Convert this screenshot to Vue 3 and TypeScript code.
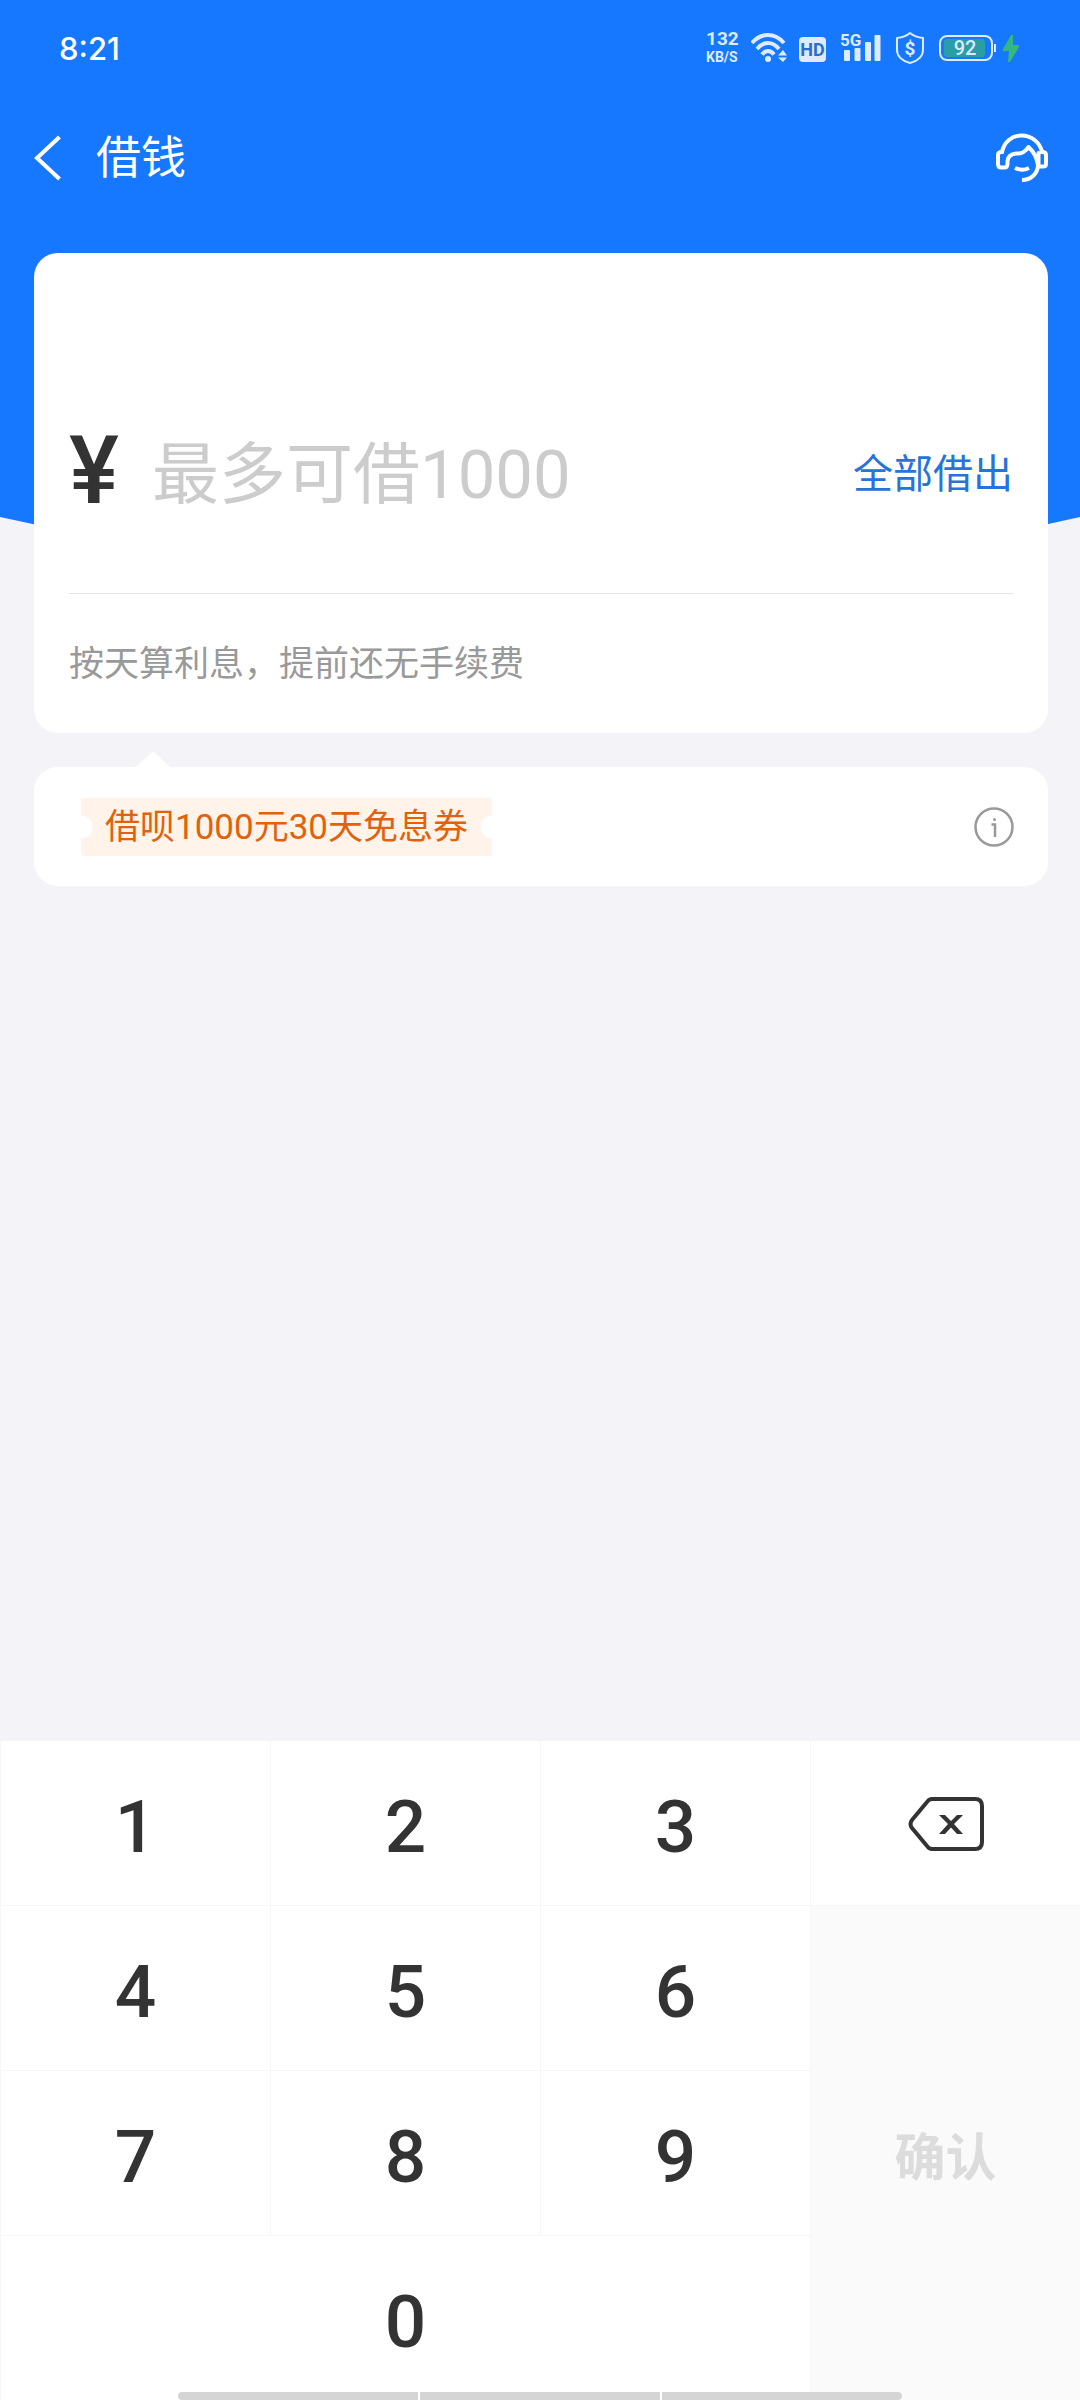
<script setup lang="ts">
import { ref } from 'vue'

const LIMIT = 1000
const amount = ref('')
const digits = ['1', '2', '3', '4', '5', '6', '7', '8', '9', '0']

function press(digit: string): void {
  const next = String(Number(amount.value + digit))
  if (Number(next) <= LIMIT) amount.value = next
}

function erase(): void {
  amount.value = amount.value.slice(0, -1)
}

function borrowAll(): void {
  amount.value = String(LIMIT)
}
</script>

<template>
  <div class="page">
    <svg class="backdrop" viewBox="0 0 1080 580" preserveAspectRatio="none" aria-hidden="true">
      <path d="M0 0H1080V517Q540 640 0 517Z" fill="#1677ff" />
    </svg>

    <div class="status">
      <span class="clock">8:21</span>
      <div class="indicators">
        <div class="rate"><span class="rate-value">132</span><span class="rate-unit">KB/S</span></div>
        <svg width="36" height="32" viewBox="0 0 36 32" fill="none" aria-hidden="true">
          <g stroke="#dcebff" stroke-width="4">
            <path d="M1 11Q8 3 17 3T33 11" />
            <path d="M6 17Q11 11 17 11T28 17" />
            <path d="M11 22.500Q13.500 19 17 19T23 22.500" />
          </g>
          <circle cx="17" cy="27" r="3" fill="#dcebff" />
          <path d="M27 23.500L32 18L36 23.500ZM27 25.500L32 30L36 25.500Z" fill="#dcebff" />
        </svg>
        <svg width="27" height="32" viewBox="0 0 27 32" aria-hidden="true">
          <rect y="5" width="27" height="25" rx="4" fill="#dcebff" />
          <text x="13.500" y="24" text-anchor="middle" font-size="18" font-weight="700" fill="#2a6bd0" class="latin">HD</text>
        </svg>
        <svg width="43" height="40" viewBox="0 -4 43 40" fill="#dcebff" aria-hidden="true">
          <text x="2" y="14" font-size="17" font-weight="700" class="latin">5G</text>
          <rect x="6" y="18" width="6" height="11" rx="1" />
          <rect x="16.500" y="16" width="6" height="13" rx="1" />
          <rect x="27" y="10" width="6" height="19" rx="1" />
          <rect x="36.500" y="3" width="6" height="26" rx="1" />
        </svg>
        <svg width="34" height="34" viewBox="0 0 34 34" aria-hidden="true">
          <path d="M17 2C20 4.500 25 6.500 30 7V19C30 25 25 30 17 32C9 30 4 25 4 19V7C9 6.500 14 4.500 17 2Z" fill="none" stroke="#dcebff" stroke-width="2" stroke-linejoin="round" />
          <text x="17" y="23.500" text-anchor="middle" font-size="19" font-weight="700" fill="#dcebff" class="latin">$</text>
        </svg>
        <svg width="80" height="32" viewBox="0 0 80 32" aria-hidden="true">
          <rect x="1" y="4" width="52" height="24" rx="7" fill="none" stroke="#dcebff" stroke-width="2" />
          <rect x="5" y="7" width="41" height="18" rx="3" fill="#2b9da6" />
          <rect x="55" y="12" width="2" height="8" fill="#dcebff" />
          <text x="26" y="23" text-anchor="middle" font-size="20" font-weight="500" fill="#dcebff" class="latin">92</text>
          <path d="M72 3L64 17V19H70L69 30H71L80 15V13H74V3Z" fill="#34b87c" />
        </svg>
      </div>
    </div>

    <header class="nav">
      <button class="icon-button back" type="button" aria-label="返回">
        <svg width="28" height="46" viewBox="0 0 28 46" fill="none" stroke="#fff" stroke-width="4">
          <path d="M25.500 2L3 23L25.500 44" />
        </svg>
      </button>
      <h1>借钱</h1>
      <button class="icon-button service" type="button" aria-label="客服">
        <svg width="52" height="50" viewBox="0 0 52 50" fill="none" stroke="#fff" stroke-width="4" stroke-linecap="round" stroke-linejoin="round">
          <path d="M6 19C8 9 16 2.500 25.500 2.500S44 9 46 19" />
          <path d="M6 19Q2 19 2 22V31Q2 34.500 5 34.500H8Q11.500 34.500 11.500 31V28C12 24 15 21 20 20.500C26 21 29 19 32.500 14C38 19 41 25 42 32" />
          <path d="M46 19Q50 19 50 22V31Q50 33.500 47 33.500H42.500V20" />
          <path d="M42 33C41 41 35 47 26 47" stroke-linecap="butt" />
          <path d="M19 35Q26 38.500 33 35" stroke-linecap="butt" />
        </svg>
      </button>
    </header>

    <main>
      <section class="card loan">
        <div class="amount">
          <label for="amount" class="yen">¥</label>
          <input id="amount" v-model="amount" type="text" inputmode="none" placeholder="最多可借1000" />
          <button class="all" type="button" @click="borrowAll">全部借出</button>
        </div>
        <p class="note">按天算利息，提前还无手续费</p>
      </section>

      <section class="card offer">
        <span class="coupon">借呗1000元30天免息券</span>
        <button class="icon-button" type="button" aria-label="优惠说明">
          <svg width="40" height="40" viewBox="0 0 40 40" fill="none" stroke="#999">
            <circle cx="20" cy="20" r="18.500" stroke-width="2.500" />
            <path d="M17.500 17.500H21V30" stroke-width="2.500" />
            <circle cx="20.500" cy="12.500" r="1.500" fill="#999" stroke="none" />
          </svg>
        </button>
      </section>
    </main>

    <div class="keypad">
      <button
        v-for="digit in digits"
        :key="digit"
        type="button"
        class="key"
        :class="{ wide: digit === '0' }"
        @click="press(digit)"
      >{{ digit }}</button>
      <button type="button" class="key erase" aria-label="删除" @click="erase">
        <svg width="76" height="56" viewBox="0 0 76 56" fill="none" stroke="#333" stroke-width="4" stroke-linejoin="round">
          <path d="M24 3H67Q74 3 74 10V46Q74 53 67 53H24Q21 53 19 50L4 32Q1 28 4 24L19 6Q21 3 24 3Z" />
          <path d="M31 19H37L43 25L49 19H55L46 28L55 38H49L43 31.500L37 38H31L40 28Z" fill="#333" stroke="none" />
        </svg>
      </button>
      <button type="button" class="key confirm" :disabled="!amount">确认</button>
      <div class="home-bar" aria-hidden="true"><i></i><i></i><i></i></div>
    </div>
  </div>
</template>

<style>
body {
  margin: 0;
  background: #f4f4f8;
}
</style>

<style scoped>
.page {
  position: relative;
  display: flex;
  flex-direction: column;
  min-height: 100vh;
  background: #f4f4f8;
  color: #333;
  font-family: Roboto, "Noto Sans CJK SC", sans-serif;
}

button,
input {
  margin: 0;
  padding: 0;
  border: 0;
  background: none;
  font-family: inherit;
  color: inherit;
}

svg {
  display: block;
}

.backdrop {
  position: absolute;
  top: 0;
  left: 0;
  width: 100%;
  height: 580px;
}

.status,
.nav,
main {
  position: relative;
}

.status {
  display: flex;
  align-items: center;
  justify-content: space-between;
  height: 96px;
  padding: 0 61px 0 59px;
  color: #fff;
}

.clock {
  padding-top: 2px;
  font: 500 31px/40px Inter, sans-serif;
}

.indicators {
  display: flex;
  align-items: center;
  gap: 12px;
}

.latin {
  font-family: Roboto, sans-serif;
}

.rate {
  display: flex;
  flex-direction: column;
  width: 33px;
  font-weight: 700;
  white-space: nowrap;
  color: #dcebff;
}

.rate-value {
  font-size: 19px;
  line-height: 18px;
}

.rate-unit {
  font-size: 14px;
  line-height: 18px;
}

.nav {
  display: flex;
  align-items: center;
  height: 124px;
  padding: 0 32px 0 34px;
  color: #fff;
}

.icon-button {
  flex: none;
  cursor: pointer;
}

h1 {
  flex: 1;
  margin: 0 0 0 34px;
  padding-top: 2px;
  font-size: 45px;
  font-weight: 400;
  line-height: 64px;
}

main {
  display: flex;
  flex-direction: column;
  gap: 34px;
  padding: 33px 32px 0 34px;
}

.card {
  border-radius: 24px;
  background: #fff;
}

.loan {
  padding: 96px 35px 0;
}

.amount {
  display: flex;
  align-items: center;
  height: 244px;
  border-bottom: 1px solid #e5e5e5;
}

.yen {
  flex: none;
  width: 83px;
  font-size: 94px;
  font-weight: 500;
  line-height: 100px;
}

.amount input {
  flex: 1;
  min-width: 0;
  height: 100px;
  padding-top: 8px;
  outline: none;
  font-size: 67px;
}

.amount input::placeholder {
  color: #ccc;
  opacity: 1;
}

.all {
  flex: none;
  padding-top: 8px;
  font-size: 40px;
  line-height: 56px;
  color: #2673d9;
  cursor: pointer;
}

.note {
  margin: 0;
  padding-top: 2px;
  font-size: 35px;
  line-height: 137px;
  color: #999;
}

.offer {
  position: relative;
  display: flex;
  align-items: center;
  justify-content: space-between;
  height: 119px;
  padding: 0 34px 0 47px;
}

.offer::before {
  content: "";
  position: absolute;
  left: 102px;
  bottom: 100%;
  border: solid transparent;
  border-width: 0 17px 16px;
  border-bottom-color: #fff;
}

.coupon {
  padding: 2px 24px 0;
  border-radius: 4px;
  background:
    radial-gradient(circle at 0 50%, #fff 11px, transparent 12px),
    radial-gradient(circle at 100% 50%, #fff 11px, transparent 12px),
    #fff3ea;
  font-size: 35px;
  line-height: 56px;
  color: #e0620d;
}

.keypad {
  position: relative;
  display: grid;
  grid-template-columns: repeat(4, 1fr);
  grid-auto-rows: 164px;
  gap: 1px;
  margin-top: auto;
  padding-left: 1px;
  background: #f6f6f7;
}

.key {
  display: flex;
  align-items: center;
  justify-content: center;
  padding-top: 8px;
  background: #fff;
  font-size: 73px;
  font-weight: 500;
  cursor: pointer;
}

.key:nth-child(3n + 1) {
  grid-column: 1;
}

.key:nth-child(3n + 2) {
  grid-column: 2;
}

.key:nth-child(3n) {
  grid-column: 3;
}

.key.wide {
  grid-column: 1 / 4;
  grid-row: 4;
}

.key.erase {
  grid-column: 4;
  grid-row: 1;
  padding-top: 2px;
}

.key.confirm {
  grid-column: 4;
  grid-row: 2 / 5;
  padding-top: 2px;
  font-size: 51px;
  font-weight: 700;
}

.key.confirm:disabled {
  background: #fafafa;
  color: #dcdcdc;
  cursor: default;
}

.home-bar {
  position: absolute;
  bottom: 0;
  left: 16.5%;
  display: flex;
  gap: 2px;
  width: 67%;
  height: 8px;
  overflow: hidden;
  border-radius: 4px;
  background: #fff;
}

.home-bar i {
  flex: 1;
  background: #d5d5d5;
}
</style>
